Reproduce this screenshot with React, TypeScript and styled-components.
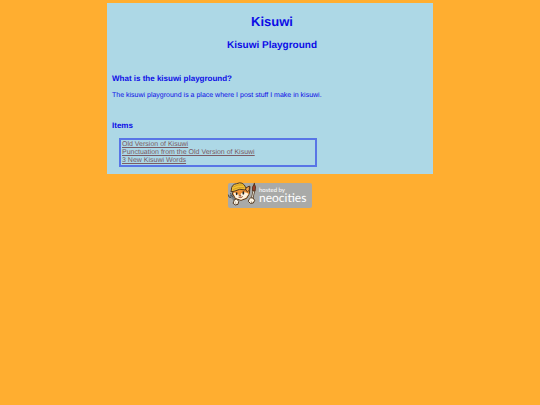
import React from "react";
import styled, { createGlobalStyle } from "styled-components";

const GlobalStyle = createGlobalStyle`
  body {
    margin: 0;
    background: #ffae30;
    color: #0c0ce6;
    font-family: "Liberation Sans", Arial, sans-serif;
    font-size: 7px;
    text-rendering: geometricPrecision;
  }
`;

const Page = styled.div`
  display: flex;
  flex-direction: column;
  align-items: center;
  gap: 8px;
  padding: 3px 8px;
`;

const Panel = styled.main`
  box-sizing: border-box;
  width: 100%;
  max-width: 326px;
  padding: 11px 1px 7px 5px;
  background: #add8e6;
`;

const Title = styled.h1`
  margin: 0;
  font-size: 13px;
  line-height: 16px;
  text-align: center;
`;

const Subtitle = styled.h2`
  margin: 10px 0 0;
  font-size: 10px;
  line-height: 12px;
  text-align: center;
`;

const Section = styled.section`
  margin-top: 22px;
`;

const Heading = styled.h3`
  margin: 0;
  font-size: 8px;
  line-height: 10px;
`;

const Text = styled.p`
  margin: 8px 0 0;
  line-height: 7px;
`;

const Items = styled.ul`
  box-sizing: border-box;
  width: 198px;
  max-width: 100%;
  margin: 7px 0 0 7px;
  padding: 1px 1px 0;
  border: 2px solid #5875e6;
  list-style: none;
  line-height: 8px;
`;

const ItemLink = styled.a`
  color: #7b5b64;
  text-decoration: underline;
`;

const HostLink = styled.a`
  display: block;
  line-height: 0;
`;

const BadgeText = styled.text`
  fill: #fff;
  font-family: Lato, sans-serif;
`;

const items = [
  "Old Version of Kisuwi",
  "Punctuation from the Old Version of Kisuwi",
  "3 New Kisuwi Words",
];

function NeocitiesBadge() {
  return (
    <svg width="86" height="26" viewBox="0 0 86 26" role="img" aria-label="Hosted by Neocities">
      <rect x="1" y="1" width="84" height="25" rx="2" fill="#a9aaa8" />
      <svg x="0" y="0" width="30" height="26" viewBox="9 6 90 78">
        <g stroke="#51371f" strokeWidth="3" strokeLinejoin="round" strokeLinecap="round">
          <path d="M20 48 34 62" stroke="#4c5155" strokeWidth="6" fill="none" />
          <path d="M13 45q0 9 8 8t7-11M20 40l3 10" stroke="#4c5155" fill="none" />
          <path d="M20 49 33 61" stroke="#d3dadd" strokeWidth="2" fill="none" />
          <path d="M30 26 25 42l10 14 16 5 17-6 8-14 2-22-12 8-12-7z" fill="#ed9136" />
          <path d="M28 39q7-3 14 3l4 6 6-8q11-8 22 2l-8 11-15 6-16-5z" fill="#fff3df" stroke="none" />
          <path d="m64 25 12-7 0 12-5 5z" fill="#f6a34b" />
          <path d="M22 29Q22 13 38 11q19-9 28 13l-2 6q-18-6-31 3l-11 2z" fill="#f3c233" />
          <path d="M29 20q12-8 29-5M28 28q14-8 32-5" fill="none" stroke="#ba8523" strokeWidth="2" />
          <path d="M38 39v4M58 36v5" stroke="#21201c" strokeWidth="5" />
          <path d="m46 46 5-1-2 4zM44 52q6 4 12-2" fill="#d57443" stroke="#7d462f" strokeWidth="2" />
          <path d="M91 11q6 9 2 23l-7-1q-3-13 5-22z" fill="#a83c2d" />
          <path d="M89 35 84 58" stroke="#51371f" strokeWidth="7" />
          <path d="M89 35 84 57" stroke="#e6e3d5" strokeWidth="3" />
          <path d="M29 64q1-8 9-7l6 7-2 9q-9 5-14-2z" fill="#fff7e6" />
          <path d="M75 58q5-8 12-4l5 7-4 8-9 1-5-5z" fill="#fff7e6" />
          <path d="M35 66v5M82 64l1 5" fill="none" strokeWidth="1" />
        </g>
      </svg>
      <BadgeText x="32" y="10" fontSize="6">hosted by</BadgeText>
      <BadgeText x="32" y="20" fontSize="12">neocities</BadgeText>
    </svg>
  );
}

export default function App() {
  return (
    <>
      <GlobalStyle />
      <Page>
        <Panel>
          <Title>Kisuwi</Title>
          <Subtitle>Kisuwi Playground</Subtitle>
          <Section>
            <Heading>What is the kisuwi playground?</Heading>
            <Text>The kisuwi playground is a place where I post stuff I make in kisuwi.</Text>
          </Section>
          <Section>
            <Heading>Items</Heading>
            <Items>
              {items.map((item) => (
                <li key={item}>
                  <ItemLink href="#">{item}</ItemLink>
                </li>
              ))}
            </Items>
          </Section>
        </Panel>
        <HostLink href="#">
          <NeocitiesBadge />
        </HostLink>
      </Page>
    </>
  );
}
